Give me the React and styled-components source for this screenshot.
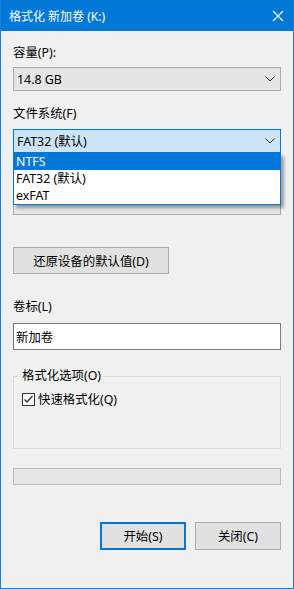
import React from 'react'
import styled, { createGlobalStyle } from 'styled-components'

const GlobalStyle = createGlobalStyle`
  html, body {
    margin: 0;
    padding: 0;
    background: #f0f0f0;
  }
  body {
    font-family: "Noto Sans", "Noto Sans CJK SC", sans-serif;
    font-size: 12.4px;
    color: #000000;
  }
`

const Window = styled.div`
  position: relative;
  box-sizing: border-box;
  width: 294px;
  height: 589px;
  border: 1px solid #1a7fd4;
  border-top: none;
  background: #f0f0f0;
  display: flex;
  flex-direction: column;
`

const TitleBar = styled.div`
  height: 31px;
  background: #0078d7;
  color: #ffffff;
  display: flex;
  align-items: center;
  justify-content: space-between;
  padding: 0 9px 0 8px;
  font-size: 12px;
  flex-shrink: 0;
`

const Body = styled.div`
  position: relative;
  display: flex;
  flex-direction: column;
  padding: 0 12px;
`

const Label = styled.div`
  height: 16px;
  line-height: 16px;
  margin-top: ${(p) => p.top}px;
  margin-bottom: ${(p) => p.bottom}px;
`

const Select = styled.div`
  box-sizing: border-box;
  height: 24px;
  border: 1px solid ${(p) => (p.focused ? '#0078d7' : '#adadad')};
  background: ${(p) => (p.focused ? '#cce4f7' : '#e5e5e5')};
  display: flex;
  align-items: center;
  justify-content: space-between;
  padding: 0 5px 0 3px;
`

const Chevron = () => (
  <svg width="10" height="6" viewBox="0 0 10 6">
    <path d="M0.5 0.5 L5 5 L9.5 0.5" fill="none" stroke="#333" strokeWidth="1" />
  </svg>
)

const DropList = styled.div`
  position: absolute;
  left: 12px;
  top: 122px;
  width: 268px;
  box-sizing: border-box;
  border: 1px solid #0078d7;
  border-top: none;
  background: #ffffff;
  box-shadow: 3px 3px 3px rgba(0, 0, 0, 0.35);
  z-index: 2;
`

const DropItem = styled.div`
  height: 17px;
  line-height: 17px;
  padding-left: 2px;
  background: ${(p) => (p.selected ? '#0078d7' : 'transparent')};
  color: ${(p) => (p.selected ? '#ffffff' : '#000000')};
`

const Button = styled.div`
  box-sizing: border-box;
  height: ${(p) => p.h || 28}px;
  width: ${(p) => p.w}px;
  margin-top: ${(p) => p.top || 0}px;
  border: ${(p) => (p.primary ? '2px solid #0078d7' : '1px solid #adadad')};
  background: #e1e1e1;
  display: flex;
  align-items: center;
  justify-content: center;
`

const TextBox = styled.div`
  box-sizing: border-box;
  height: 27px;
  border: 1px solid #7a7a7a;
  background: #ffffff;
  display: flex;
  align-items: center;
  padding-left: 2px;
`

const GroupBox = styled.fieldset`
  box-sizing: border-box;
  height: 81px;
  margin: 0;
  margin-top: 18px;
  padding: 0 8px;
  border: 1px solid #dcdcdc;
`

const Legend = styled.legend`
  padding: 0 2px;
  margin-left: -2px;
  line-height: 16px;
`

const CheckRow = styled.div`
  display: flex;
  align-items: center;
  gap: 3px;
  margin-top: 6px;
`

const CheckBox = styled.div`
  box-sizing: border-box;
  width: 13px;
  height: 13px;
  border: 1px solid #333333;
  background: #ffffff;
  display: flex;
  align-items: center;
  justify-content: center;
`

const Progress = styled.div`
  box-sizing: border-box;
  height: 17px;
  margin-top: 19px;
  border: 1px solid #bcbcbc;
  background: #e6e6e6;
`

const ButtonRow = styled.div`
  display: flex;
  justify-content: flex-end;
  gap: 9px;
  margin-top: 37px;
`

const App = () => (
  <>
    <GlobalStyle />
    <Window>
      <TitleBar>
        <span>格式化 新加卷 (K:)</span>
        <svg width="12" height="12" viewBox="0 0 12 12">
          <path d="M1 1 L11 11 M11 1 L1 11" stroke="#ffffff" strokeWidth="1.1" />
        </svg>
      </TitleBar>
      <Body>
        <Label top={14} bottom={6}>容量(P):</Label>
        <Select>
          <span>14.8 GB</span>
          <Chevron />
        </Select>
        <Label top={15} bottom={7}>文件系统(F)</Label>
        <Select focused>
          <span>FAT32 (默认)</span>
          <Chevron />
        </Select>
        {/* allocation unit label and select sit under the open list */}
        <Label top={15} bottom={7} />
        <Select>
          <span />
          <Chevron />
        </Select>
        <Button w={156} h={27} top={32}>还原设备的默认值(D)</Button>
        <Label top={25} bottom={8}>卷标(L)</Label>
        <TextBox>新加卷</TextBox>
        <GroupBox>
          <Legend>格式化选项(O)</Legend>
          <CheckRow>
            <CheckBox>
              <svg width="11" height="11" viewBox="0 0 11 11">
                <path d="M1.5 5.5 L4 8 L9.5 2" fill="none" stroke="#333" strokeWidth="1.3" />
              </svg>
            </CheckBox>
            <span>快速格式化(Q)</span>
          </CheckRow>
        </GroupBox>
        <Progress />
        <ButtonRow>
          <Button w={86} primary>开始(S)</Button>
          <Button w={86}>关闭(C)</Button>
        </ButtonRow>
        <DropList>
          <DropItem selected>NTFS</DropItem>
          <DropItem>FAT32 (默认)</DropItem>
          <DropItem>exFAT</DropItem>
        </DropList>
      </Body>
    </Window>
  </>
)

export default App
